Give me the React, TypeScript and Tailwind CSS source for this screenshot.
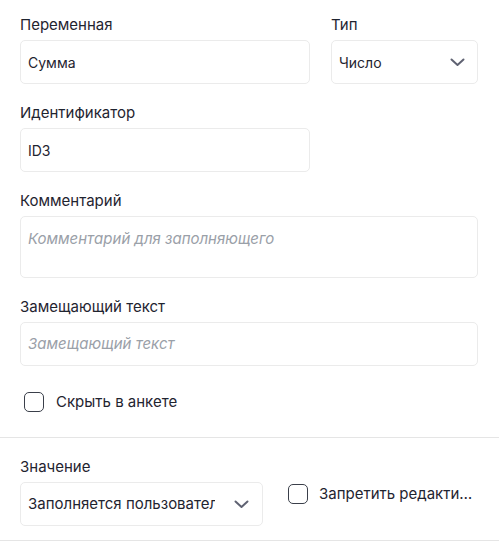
import React from "react";

function Chevron() {
  return (
    <svg width="15" height="9" viewBox="0 0 15 9" fill="none" stroke="#5f6272" strokeWidth="2" strokeLinecap="round" strokeLinejoin="round">
      <path d="M1.5 1.5 L7.5 7 L13.5 1.5" />
    </svg>
  );
}

function Label({ children }: { children: React.ReactNode }) {
  return <div className="h-5 leading-5 text-[15px] text-[#1f2430] mb-[5px]">{children}</div>;
}

function Box({ className = "", children }: { className?: string; children?: React.ReactNode }) {
  return (
    <div className={"rounded-[5px] border border-[#ebebeb] bg-white flex items-center pl-[7px] pr-[9px] text-[14px] text-[#1f2430] " + className}>
      {children}
    </div>
  );
}

function Checkbox() {
  return <div className="w-5 h-5 shrink-0 rounded-[5px] border-[1.5px] border-[#3a3f4a] bg-white" />;
}

export default function App() {
  return (
    <div className="w-[499px] h-[541px] bg-white overflow-hidden" style={{ fontFamily: "Inter, 'Noto Sans', sans-serif" }}>
      <div className="pl-5 pr-[21px] pt-[15px]">
        <div className="flex gap-[21px]">
          <div className="w-[290px]">
            <Label>Переменная</Label>
            <Box className="h-11">Сумма</Box>
          </div>
          <div className="flex-1">
            <Label>Тип</Label>
            <Box className="h-11 justify-between pr-[12px] text-[14.5px]">
              <span>Число</span>
              <Chevron />
            </Box>
          </div>
        </div>
        <div className="mt-[19px] w-[290px]">
          <Label>Идентификатор</Label>
          <Box className="h-11">ID3</Box>
        </div>
        <div className="mt-[19px]">
          <Label>Комментарий</Label>
          <Box className="h-[62px] items-start pt-[11px] italic text-[15px] text-[#9aa0a8]">Комментарий для заполняющего</Box>
        </div>
        <div className="mt-[19px]">
          <Label>Замещающий текст</Label>
          <Box className="h-11 italic text-[15px] text-[#9aa0a8]">Замещающий текст</Box>
        </div>
        <div className="mt-[26px] pl-1 flex items-center gap-3 h-5 text-[15px] text-[#1f2430]">
          <Checkbox />
          <span>Скрыть в анкете</span>
        </div>
      </div>
      <div className="mt-[25px] border-t border-[#e5e5e5]" />
      <div className="pl-5 pr-[21px] pt-[19px] flex items-start">
        <div className="w-[243px]">
          <Label>Значение</Label>
          <Box className="h-[44px] justify-between pr-[13px] text-[15px]">
            <span className="overflow-hidden whitespace-nowrap w-[187px]">Заполняется пользователем</span>
            <Chevron />
          </Box>
        </div>
        <div className="ml-[25px] mt-[26px] flex items-center gap-[11px] min-w-0 text-[15px] text-[#1f2430]">
          <Checkbox />
          <span className="truncate w-[156px]">Запретить редактирование</span>
        </div>
      </div>
      <div className="mt-[14px] border-t border-[#e5e5e5]" />
    </div>
  );
}
